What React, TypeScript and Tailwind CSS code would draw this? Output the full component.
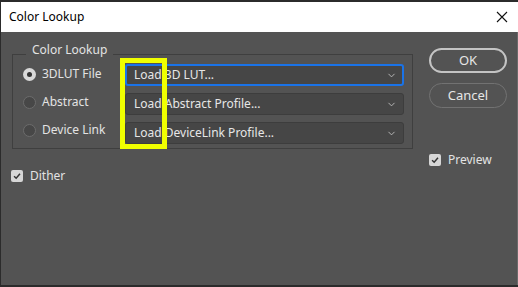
import { ChevronDown } from 'lucide-react';

const font = { fontFamily: '"Noto Sans", "Open Sans", sans-serif' };

function Radio({ checked, label }: { checked?: boolean; label: string }) {
  return (
    <div className="flex h-[22px] items-center gap-[6px]">
      {checked ? (
        <span className="flex h-[13px] w-[13px] items-center justify-center rounded-full bg-[#d9d9d9]">
          <span className="h-[5px] w-[5px] rounded-full bg-[#333]" />
        </span>
      ) : (
        <span className="h-[13px] w-[13px] rounded-full border border-[#6c6c6c] bg-[#474747]" />
      )}
      <span className="text-[12px] text-[#e3e3e3]">{label}</span>
    </div>
  );
}

function Select({ text, focused }: { text: string; focused?: boolean }) {
  return (
    <div
      className={
        focused
          ? 'flex h-[22px] items-center justify-between rounded-[3px] border-2 border-[#1a73e8] bg-[#464646] pl-[7px] pr-[5px]'
          : 'flex h-[22px] items-center justify-between rounded-[3px] border border-[#3d3d3d] bg-[#464646] pl-[8px] pr-[6px]'
      }
    >
      <span className="text-[12px] text-[#e6e6e6]">{text}</span>
      <ChevronDown className="h-[11px] w-[11px] text-[#bdbdbd]" strokeWidth={2} />
    </div>
  );
}

function Check({ label }: { label: string }) {
  return (
    <div className="flex items-center gap-[7px]">
      <span className="flex h-[12px] w-[12px] items-center justify-center rounded-[2px] bg-[#d6d6d6]">
        <svg viewBox="0 0 12 12" className="h-[10px] w-[10px]">
          <path d="M2.5 6.2 L5 8.6 L9.6 3.4" fill="none" stroke="#333" strokeWidth="1.8" />
        </svg>
      </span>
      <span className="text-[12px] text-[#e3e3e3]">{label}</span>
    </div>
  );
}

export default function App() {
  return (
    <div className="flex h-[287px] w-[518px] flex-col bg-[#2b2b2b]" style={font}>
      {/* Title bar */}
      <div className="mt-[2px] ml-[1px] flex h-[30px] items-center justify-between bg-white pl-[8px] pr-[10px]">
        <span className="text-[12px] text-black">Color Lookup</span>
        <svg viewBox="0 0 12 12" className="h-[12px] w-[12px]">
          <path d="M1 1 L11 11 M11 1 L1 11" stroke="#111" strokeWidth="1.1" />
        </svg>
      </div>

      {/* Body */}
      <div className="relative ml-[1px] mb-[2px] flex flex-1 border-r border-[#6a6a6a] bg-[#535353]">
        <div className="flex flex-col pt-[22px]">
          {/* group box */}
          <div className="relative ml-[11px] w-[401px] border border-[#3f3f3f] pt-[9px] pr-[8px] pb-[4px] pl-[10px]">
            <span className="absolute top-[-13px] left-[13px] bg-[#535353] px-[6px] text-[12px] leading-[16px] text-[#e3e3e3]">
              Color Lookup
            </span>
            <div className="flex">
              <div className="-mt-[1px] flex w-[102px] flex-col gap-[6px]">
                <Radio checked label="3DLUT File" />
                <Radio label="Abstract" />
                <Radio label="Device Link" />
              </div>
              <div className="flex w-[279px] flex-col gap-[7px]">
                <Select focused text="Load 3D LUT..." />
                <Select text="Load Abstract Profile..." />
                <Select text="Load DeviceLink Profile..." />
              </div>
            </div>
          </div>
          <div className="mt-[18px] ml-[10px]">
            <Check label="Dither" />
          </div>
        </div>

        <div className="ml-[16px] flex flex-col pt-[16px]">
          <div className="flex h-[25px] w-[78px] items-center justify-center rounded-full border-2 border-[#c4c4c4] text-[13px] text-[#e6e6e6]">
            OK
          </div>
          <div className="mt-[10px] flex h-[25px] w-[78px] items-center justify-center rounded-full border border-[#727272] text-[13px] text-[#e6e6e6]">
            Cancel
          </div>
          <div className="mt-[43px]">
            <Check label="Preview" />
          </div>
        </div>

        {/* highlight overlay */}
        <div className="absolute top-[26px] left-[119px] h-[91px] w-[47px] border-[5px] border-[#f0ff00]" />
      </div>
    </div>
  );
}
